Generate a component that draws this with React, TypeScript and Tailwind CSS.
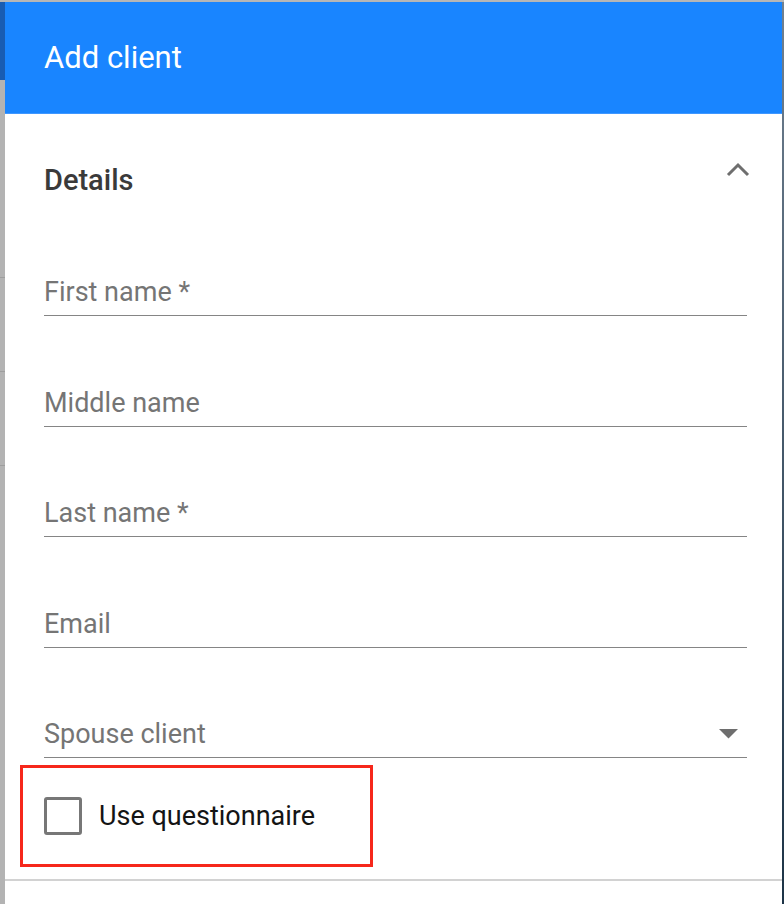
import { useState } from 'react';

const fields = [
  { label: 'First name *', gap: 'mt-[81px]' },
  { label: 'Middle name', gap: 'mt-[72px]' },
  { label: 'Last name *', gap: 'mt-[71px]' },
  { label: 'Email', gap: 'mt-[72px]' },
];

function ChevronUp() {
  return (
    <svg width="24" height="16" viewBox="0 0 24 16" className="-mt-[2px]">
      <path d="M2 13 L12 3 L22 13" fill="none" stroke="#6e6e6e" strokeWidth="3" />
    </svg>
  );
}

function Field({ label, gap }: { label: string; gap: string }) {
  return (
    <div className={`${gap} border-b border-[#858585] pb-[8px]`}>
      <span className="block text-[27px] leading-[30px] text-[#757575]">{label}</span>
    </div>
  );
}

export default function App() {
  const [checked, setChecked] = useState(false);

  return (
    <div className="w-[784px] h-[904px] overflow-hidden bg-white font-['Roboto',sans-serif]">
      <div className="h-[2px] bg-[#b6b6b6]" />
      <div className="flex h-[902px]">
        {/* page behind the dialog, left edge */}
        <div className="w-[5px] flex flex-col bg-[#b3b3b3]">
          <div className="h-[78px] bg-[#185cb3]" />
          <div className="h-[197px]" />
          <div className="h-px bg-[#9e9e9e]" />
          <div className="h-[93px]" />
          <div className="h-px bg-[#9e9e9e]" />
          <div className="h-[93px]" />
          <div className="h-px bg-[#9e9e9e]" />
        </div>

        <div className="flex-1 flex flex-col">
          <div className="h-[112px] bg-[#1985ff] border-b border-[#3f97ff] flex items-center pl-[39px]">
            <h1 className="text-[31px] leading-none text-white">Add client</h1>
          </div>

          <div className="pl-[39px] pr-[35px]">
            <div className="mt-[50px] flex items-start justify-between">
              <h2 className="text-[29px] leading-[32px] font-medium text-[#3a3a3a]">Details</h2>
              <div className="-mr-[3px]">
                <ChevronUp />
              </div>
            </div>

            {fields.map((f) => (
              <Field key={f.label} label={f.label} gap={f.gap} />
            ))}

            <div className="mt-[71px] border-b border-[#858585] pb-[8px] flex items-center justify-between">
              <span className="text-[27px] leading-[30px] text-[#757575]">Spouse client</span>
              <svg width="20" height="10" viewBox="0 0 20 10" className="mr-[8px]">
                <path d="M0 0 L19 0 L9.5 9.5 Z" fill="#6e6e6e" />
              </svg>
            </div>
          </div>

          <div className="ml-[15px] mt-[7px] w-[353px] h-[102px] border-[3px] border-[#f6271b] flex items-center pl-[21px] gap-[17px]">
            <button
              onClick={() => setChecked(!checked)}
              className="w-[38px] h-[38px] rounded-[3px] border-[3px] border-[#777777] bg-white"
            />
            <span className="text-[27px] leading-[30px] text-[#141414]">Use questionnaire</span>
          </div>

          <div className="mt-[12px] h-[2px] bg-[#d2d2d2]" />
        </div>

        {/* page behind the dialog, right edge */}
        <div className="w-[2px] bg-linear-to-b from-[#708090] to-[#1d3447]" />
      </div>
    </div>
  );
}
